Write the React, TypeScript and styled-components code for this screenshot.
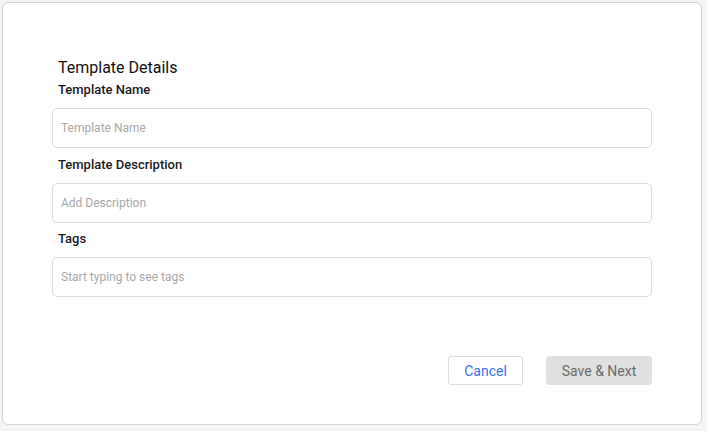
import React, { useState } from 'react';
import styled, { createGlobalStyle } from 'styled-components';

const GlobalStyle = createGlobalStyle`
  html, body {
    margin: 0;
    padding: 0;
    background: #f4f4f4;
    font-family: Roboto, "Liberation Sans", Arial, sans-serif;
  }
  * { box-sizing: border-box; }
`;

const Page = styled.div`
  padding: 2px 5px 6px 2px;
  height: 431px;
`;

const Card = styled.div`
  height: 423px;
  background: #ffffff;
  border: 1px solid #d4d4d4;
  border-radius: 6px;
  padding: 55px 49px 0 49px;
  display: flex;
  flex-direction: column;
`;

const Title = styled.h2`
  margin: 0 0 0 6px;
  font-size: 16px;
  font-weight: 400;
  line-height: 20px;
  color: #111;
`;

const Field = styled.div<{ $first?: boolean }>`
  display: flex;
  flex-direction: column;
  margin-top: ${(p) => (p.$first ? '4px' : '8.5px')};
`;

const Label = styled.label`
  margin: 0 0 10px 6px;
  font-size: 13px;
  font-weight: 500;
  line-height: 16px;
  color: #1a1a1a;
`;

const Input = styled.input`
  width: 600px;
  height: 40px;
  border: 1px solid #dcdcdc;
  border-radius: 5px;
  padding: 0 8px;
  font-family: inherit;
  font-size: 12px;
  color: #333;
  outline: none;

  &::placeholder {
    color: #a8a8a8;
  }
`;

const Actions = styled.div`
  display: flex;
  justify-content: flex-end;
  gap: 23px;
  width: 600px;
  margin-top: 59px;
`;

const Button = styled.button<{ $primary?: boolean }>`
  height: 29px;
  width: ${(p) => (p.$primary ? '106px' : '75px')};
  padding: 0;
  border-radius: 3px;
  font-family: inherit;
  font-size: 14px;
  cursor: pointer;
  border: 1px solid ${(p) => (p.$primary ? '#e0e0e0' : '#dcdcdc')};
  background: ${(p) => (p.$primary ? '#e0e0e0' : '#ffffff')};
  color: ${(p) => (p.$primary ? '#6b6b6b' : '#3b6ff5')};
`;

const App: React.FC = () => {
  const [name, setName] = useState('');
  const [description, setDescription] = useState('');
  const [tags, setTags] = useState('');

  return (
    <>
      <GlobalStyle />
      <Page>
        <Card>
          <Title>Template Details</Title>
          <Field $first>
            <Label>Template Name</Label>
            <Input placeholder="Template Name" value={name} onChange={(e) => setName(e.target.value)} />
          </Field>
          <Field>
            <Label>Template Description</Label>
            <Input
              placeholder="Add Description"
              value={description}
              onChange={(e) => setDescription(e.target.value)}
            />
          </Field>
          <Field>
            <Label>Tags</Label>
            <Input placeholder="Start typing to see tags" value={tags} onChange={(e) => setTags(e.target.value)} />
          </Field>
          <Actions>
            <Button>Cancel</Button>
            <Button $primary disabled>
              Save &amp; Next
            </Button>
          </Actions>
        </Card>
      </Page>
    </>
  );
};

export default App;
